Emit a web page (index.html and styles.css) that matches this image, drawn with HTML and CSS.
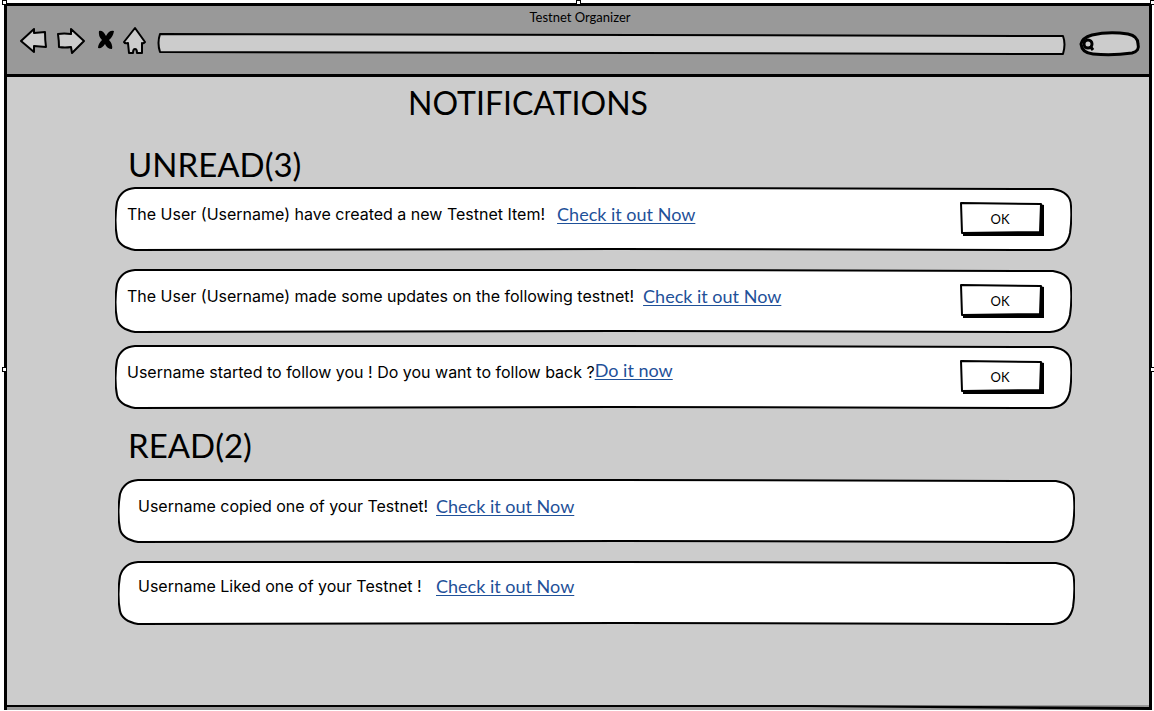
FILE: index.html
```html
<!DOCTYPE html>
<html lang="en">
<head>
<meta charset="utf-8">
<title>Testnet Organizer</title>
<link rel="stylesheet" href="styles.css">
</head>
<body>
<svg class="defs" aria-hidden="true">
  <symbol id="card" viewBox="0 0 957 64" preserveAspectRatio="none">
    <path vector-effect="non-scaling-stroke" d="M20 1 L500 1 L938 2 Q956 5 956 19 Q957 32 955 46 Q952 62 935 63 L500 62 L20 63 Q4 60 2 50 Q-1 34 2 15 Q6 2 20 1 Z"/>
  </symbol>
  <symbol id="button" viewBox="0 0 84 34" preserveAspectRatio="none">
    <path class="shade" d="M80 2 L84 3 V34 H3 V31 L80 31 Z"/>
    <path vector-effect="non-scaling-stroke" d="M1 1 L81 2 L80 30 L2 31 Z"/>
  </symbol>
</svg>
<div class="window">
  <header class="chrome">
    <div class="title">Testnet Organizer</div>
    <div class="toolbar">
      <div class="nav">
        <button class="tool" aria-label="Back"><svg class="sketch" width="28" height="28" viewBox="0 0 28 28"><path d="M1 14 L14 2 L14 6 L25 5 Q25 13 26 20 L14 19 L14 25 Z"/></svg></button>
        <button class="tool" aria-label="Forward"><svg class="sketch" width="29" height="28" viewBox="0 0 29 28"><path d="M2 7 Q8 6 15 7 L15 2 L28 14 L16 26 L15 20 Q9 21 3 20 Q3 14 2 7 Z"/></svg></button>
        <button class="tool stop" aria-label="Stop"><svg width="18" height="20" viewBox="0 0 18 20"><path d="M2 1 Q6 0 9 6 Q12 0 17 1 Q16 7 12 10 Q16 14 15 19 Q10 19 8 14 Q5 19 1 18 Q1 14 5 10 Q1 6 2 1 Z"/></svg></button>
        <button class="tool" aria-label="Home"><svg class="sketch" width="24" height="28" viewBox="0 0 24 28"><path d="M12 1 L22 15 Q20 17 19 16 L19 26 L14 26 Q14 22 12 22 Q10 22 10 26 L6 26 L5 16 Q2 17 1 15 Z"/></svg></button>
      </div>
      <label class="address">
        <svg class="shape" viewBox="0 0 907 22" preserveAspectRatio="none" aria-hidden="true"><path vector-effect="non-scaling-stroke" d="M3 1 L904 3 Q907 11 904 21 L3 19 Q0 10 3 1 Z"/></svg>
        <input type="text" aria-label="Address">
      </label>
      <label class="search">
        <svg class="shape" viewBox="0 0 60 26" aria-hidden="true"><path d="M12 4 Q29 0 48 3 Q58 5 58 13 Q60 20 52 22 Q32 25 13 23 Q2 22 1 13 Q2 7 12 4 Z"/><circle cx="8" cy="13" r="4"/><path d="M10 15 L13 19"/></svg>
        <input type="search" aria-label="Search">
      </label>
    </div>
  </header>
  <main class="content">
    <h1>NOTIFICATIONS</h1>
    <section class="group">
      <h2>UNREAD(3)</h2>
      <ul class="cards">
        <li class="card"><svg class="shape"><use href="#card"/></svg><p><span>The User (Username) have created a new Testnet Item! </span><a href="#item">Check it out Now</a></p><button class="ok"><svg class="shape"><use href="#button"/></svg><span>OK</span></button></li>
        <li class="card"><svg class="shape"><use href="#card"/></svg><p><span>The User (Username) made some updates on the following testnet!</span><a href="#updates">Check it out Now</a></p><button class="ok"><svg class="shape"><use href="#button"/></svg><span>OK</span></button></li>
        <li class="card close"><svg class="shape"><use href="#card"/></svg><p><span>Username started to follow you ! Do you want to follow back ?</span><a href="#follow">Do it now</a></p><button class="ok"><svg class="shape"><use href="#button"/></svg><span>OK</span></button></li>
      </ul>
    </section>
    <section class="group read">
      <h2>READ(2)</h2>
      <ul class="cards">
        <li class="card"><svg class="shape"><use href="#card"/></svg><p><span>Username copied one of your Testnet! </span><a href="#copied">Check it out Now</a></p></li>
        <li class="card"><svg class="shape"><use href="#card"/></svg><p><span>Username Liked one of your Testnet ! </span><a href="#liked">Check it out Now</a></p></li>
      </ul>
    </section>
  </main>
  <svg class="base" viewBox="0 0 1142 5" preserveAspectRatio="none" aria-hidden="true"><path d="M0 0 H800 L1142 2 V5 L800 2 H0 Z"/></svg>
</div>
<i class="handle top left"></i><i class="handle top center"></i><i class="handle top right"></i>
<i class="handle middle left"></i><i class="handle middle right"></i>
</body>
</html>
```

FILE: styles.css
```css
* { box-sizing: border-box; }
body {
  position: relative;
  display: flex;
  min-height: 100vh;
  margin: 0;
  padding: 3px 2px 1px 4px;
  background: #fff;
  color: #000;
  font-family: Lato, sans-serif;
  font-size: 16px;
  line-height: 20px;
}
.defs { position: absolute; width: 0; height: 0; }
.window {
  flex: 1;
  display: flex;
  flex-direction: column;
  border: 3px solid #000;
  border-bottom: 0;
  background: #ccc;
}
button, input { font: inherit; color: inherit; background: none; border: 0; padding: 0; margin: 0; }
button { cursor: pointer; }
.shape {
  position: absolute;
  inset: 0;
  width: 100%;
  height: 100%;
  overflow: visible;
  fill: #fff;
  stroke: #000;
  stroke-width: 2;
  stroke-linejoin: round;
}
.chrome { background: #999; border-bottom: 3px solid #000; padding: 2px 9px 18px 13px; }
.title { text-align: center; font-size: 13px; line-height: 18px; }
.toolbar { display: flex; align-items: center; gap: 14px; height: 30px; }
.nav { display: flex; align-items: center; gap: 8px; margin-right: -4px; }
.tool { display: flex; }
.stop { margin: 0 0 2px 4px; }
.nav svg { overflow: visible; }
.sketch { fill: #ccc; stroke: #000; stroke-width: 2; stroke-linejoin: round; }
.address { position: relative; flex: 1; height: 22px; margin-top: 6px; }
.search { position: relative; width: 60px; height: 26px; margin-top: 6px; }
.toolbar .shape { fill: #ccc; }
.search .shape { stroke-width: 3; }
.address input, .search input { position: relative; width: 100%; height: 100%; padding: 0 8px; font-size: 13px; outline: 0; }
.search input { padding-left: 18px; appearance: none; }
.content { flex: 1; padding: 6px 77px 60px 108px; }
h1, h2 { margin: 0; font-size: 32px; font-weight: 400; line-height: 40px; }
h1 { text-align: center; padding-right: 131px; }
h2 { padding: 0 0 3px 13px; font-size: 33px; }
.group { margin-top: 21px; }
.read { margin: 16px -3px 0 3px; }
.read h2 { margin-left: -3px; padding-bottom: 14px; }
.cards { display: flex; flex-direction: column; gap: 18px; margin: 0; padding: 0; list-style: none; }
.card { position: relative; display: flex; justify-content: space-between; align-items: flex-start; min-height: 64px; padding: 15px 28px 15px 12px; }
.close { margin-top: -6px; }
.read .card { padding: 15px 28px 15px 20px; }
.card p { position: relative; display: flex; align-items: center; gap: 9px; margin: 0; padding-top: 2px; font-family: Inter, sans-serif; }
.card a { font-family: Lato, sans-serif; font-size: 18px; color: #1f5199; text-underline-offset: 2px; text-decoration-thickness: 1px; }
.card:first-child p { gap: 12px; }
.card.close p { align-items: flex-start; gap: 0; padding-top: 0; }
.close p span { padding-top: 2px; }
.read .card p { gap: 0; }
.read p span { min-width: 298px; }
.read .card + .card { padding-top: 13px; }
.ok { position: relative; flex: none; width: 84px; height: 34px; padding-right: 4px; font-size: 13px; }
.ok span { position: relative; }
.shade { fill: #000; stroke: none; }
.base { display: block; width: 100%; height: 5px; background: #999; }
.handle { position: absolute; width: 5px; height: 5px; background: #fff; border: 1px solid #000; }
.top { top: 0; }
.middle { top: 367px; }
.left { left: 2px; }
.center { left: 50%; margin-left: -1px; }
.right { right: -1px; }
```
